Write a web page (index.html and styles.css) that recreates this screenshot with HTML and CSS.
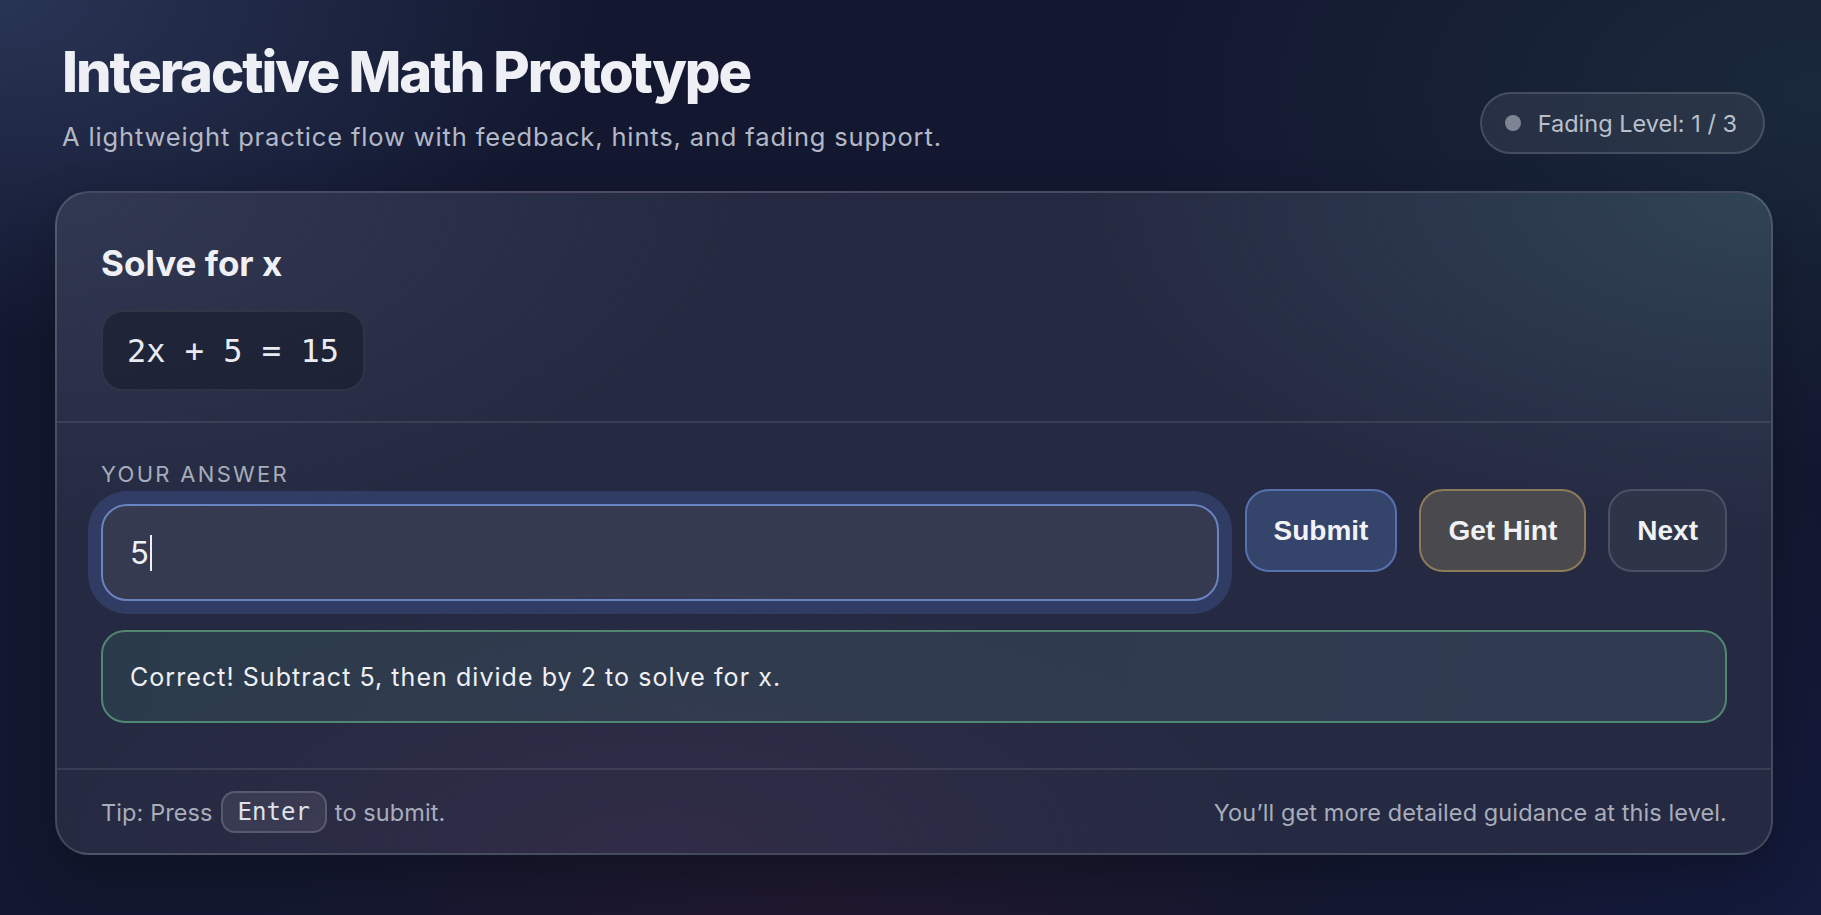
FILE: index.html
```html
<!DOCTYPE html>
<html lang="en">
<head>
<meta charset="utf-8">
<title>Interactive Math Prototype</title>
<link rel="stylesheet" href="styles.css">
</head>
<body>
<main class="page">
  <header class="header">
    <div class="header-text">
      <h1 class="title">Interactive Math Prototype</h1>
      <p class="subtitle">A lightweight practice flow with feedback, hints, and fading support.</p>
    </div>
    <div class="badge"><span class="badge-dot"></span>Fading Level: 1 / 3</div>
  </header>

  <section class="card">
    <div class="problem">
      <h2 class="problem-title">Solve for x</h2>
      <div class="equation">2x + 5 = 15</div>
    </div>

    <div class="answer">
      <div class="answer-row">
        <div class="field">
          <label class="field-label" for="ans">YOUR ANSWER</label>
          <div class="input-ring">
            <div class="input" id="ans"><span class="input-value">5</span><span class="caret"></span></div>
          </div>
        </div>
        <div class="actions">
          <button class="btn btn-submit">Submit</button>
          <button class="btn btn-hint">Get Hint</button>
          <button class="btn btn-next">Next</button>
        </div>
      </div>
      <div class="feedback">Correct! Subtract 5, then divide by 2 to solve for x.</div>
    </div>

    <footer class="card-footer">
      <div class="tip">Tip: Press <kbd class="kbd">Enter</kbd> to submit.</div>
      <div class="guidance">You’ll get more detailed guidance at this level.</div>
    </footer>
  </section>
</main>
</body>
</html>
```

FILE: styles.css
```css
* { box-sizing: border-box; }

html, body { margin: 0; height: 100%; }

body {
  font-family: Inter, "Noto Sans", "Liberation Sans", sans-serif;
  color: #eef0f5;
  background-color: #131830;
  background-image:
    radial-gradient(ellipse 800px 450px at 0% 0%, rgba(45, 58, 92, 0.85), rgba(45, 58, 92, 0) 75%),
    radial-gradient(ellipse 800px 400px at 45% 105%, rgba(45, 25, 45, 0.55), rgba(45, 25, 45, 0) 70%),
    radial-gradient(ellipse 800px 600px at 100% 100%, rgba(20, 28, 65, 0.7), rgba(20, 28, 65, 0) 70%),
    radial-gradient(ellipse 900px 500px at 100% 10%, rgba(28, 45, 62, 0.8), rgba(28, 45, 62, 0) 75%);
  overflow: hidden;
}

.page {
  padding: 42px 48px 0 55px;
}

/* Header */
.header {
  display: flex;
  justify-content: space-between;
  align-items: flex-end;
  padding: 0 8px 0 7px;
}

.title {
  margin: 0;
  font-size: 56px;
  line-height: 61px;
  font-weight: 800;
  letter-spacing: -0.037em;
  color: #eef0f5;
}

.subtitle {
  margin: 17px 0 0;
  font-size: 25.5px;
  line-height: 34px;
  letter-spacing: 0.85px;
  color: #b3b8c6;
  font-weight: 400;
}

.badge {
  display: flex;
  align-items: center;
  gap: 17px;
  height: 62px;
  padding: 0 26px 0 23px;
  border-radius: 31px;
  border: 2px solid rgba(255, 255, 255, 0.14);
  background: rgba(255, 255, 255, 0.07);
  color: #b9c0cc;
  font-size: 23.5px;
}

.badge-dot {
  width: 16px;
  height: 16px;
  border-radius: 50%;
  background: #7d8595;
}

/* Card */
.card {
  margin-top: 37px;
  border: 2px solid rgba(255, 255, 255, 0.15);
  border-radius: 34px;
  background-color: #252a42;
  background-image:
    radial-gradient(ellipse 900px 450px at 100% 0%, rgba(50, 72, 88, 0.85), rgba(50, 72, 88, 0) 75%),
    radial-gradient(ellipse 900px 450px at 0% 0%, rgba(50, 57, 82, 0.95), rgba(50, 57, 82, 0) 75%),
    radial-gradient(ellipse 800px 350px at 35% 100%, rgba(52, 44, 72, 0.8), rgba(52, 44, 72, 0) 75%);
  box-shadow: 0 20px 50px rgba(0, 0, 0, 0.25);
  overflow: hidden;
}

.problem {
  padding: 49px 44px 30px;
  border-bottom: 2px solid rgba(255, 255, 255, 0.09);
}

.problem-title {
  margin: 0 0 26px;
  font-size: 35px;
  line-height: 42px;
  font-weight: 700;
  color: #eef0f5;
}

.equation {
  display: inline-block;
  padding: 0 24px;
  height: 81px;
  line-height: 78px;
  border-radius: 22px;
  border: 2px solid rgba(255, 255, 255, 0.08);
  background: rgba(15, 18, 30, 0.42);
  font-family: "DejaVu Sans Mono", "Liberation Mono", monospace;
  font-size: 32px;
  color: #e9ebf0;
}

/* Answer */
.answer {
  padding: 37px 44px 45px;
  border-bottom: 2px solid rgba(255, 255, 255, 0.09);
}

.answer-row {
  display: flex;
  align-items: center;
  gap: 26px;
}

.field {
  flex: 1;
  display: flex;
  flex-direction: column;
}

.field-label {
  font-size: 22px;
  line-height: 28px;
  letter-spacing: 0.105em;
  color: #a6acba;
  margin-bottom: 16px;
}

.input-ring {
  border-radius: 26px;
  box-shadow: 0 0 0 13px rgba(75, 100, 175, 0.32);
}

.input {
  display: flex;
  align-items: center;
  height: 97px;
  padding: 0 27px;
  border-radius: 26px;
  border: 2px solid #6a84c2;
  background: rgba(255, 255, 255, 0.08);
  font-size: 31px;
  color: #eef0f5;
}

.caret {
  display: inline-block;
  width: 2px;
  height: 36px;
  margin-left: 1px;
  background: #eef0f5;
}

.actions {
  display: flex;
  gap: 22px;
}

.btn {
  height: 83px;
  padding: 0 27px;
  border-radius: 24px;
  border: 2px solid;
  font-family: "Liberation Sans", Arial, sans-serif;
  font-weight: 700;
  font-size: 28px;
  color: #f1f2f6;
}

.btn-submit {
  background: #35446a;
  border-color: #5671ae;
}

.btn-hint {
  background: #4a4a4e;
  border-color: #8c7b58;
}

.btn-next {
  background: #2f3548;
  border-color: #4a5166;
}

.feedback {
  margin-top: 29px;
  height: 93px;
  display: flex;
  align-items: center;
  padding: 0 27px;
  border-radius: 24px;
  border: 2px solid #4f8771;
  background: linear-gradient(100deg, rgba(70, 125, 110, 0.2), rgba(90, 125, 140, 0.2));
  font-size: 25px;
  letter-spacing: 1.05px;
  color: #eef0f4;
}

/* Footer */
.card-footer {
  display: flex;
  justify-content: space-between;
  align-items: center;
  padding: 21px 44px 20px;
  font-size: 23.5px;
  letter-spacing: 0.1px;
  color: #a8adbb;
}

.tip {
  display: flex;
  align-items: center;
  gap: 8px;
}

.kbd {
  display: inline-flex;
  align-items: center;
  height: 42px;
  padding: 0 15px;
  border-radius: 14px;
  border: 2px solid rgba(255, 255, 255, 0.16);
  background: rgba(255, 255, 255, 0.08);
  font-family: "DejaVu Sans Mono", "Liberation Mono", monospace;
  font-size: 24px;
  letter-spacing: 0;
  color: #dfe2ea;
}
```
